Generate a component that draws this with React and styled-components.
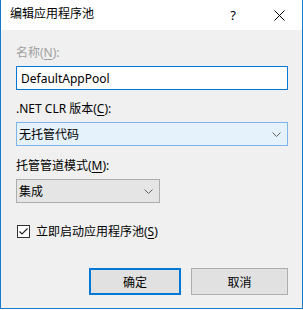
import React from "react";
import styled, { createGlobalStyle } from "styled-components";

const Global = createGlobalStyle`
  html, body { margin: 0; padding: 0; background: #ffffff; }
  body { font-family: "Noto Sans", "Noto Sans CJK SC", sans-serif; font-size: 12px; color: #000; }
`;

const Window = styled.div`
  width: 303px;
  height: 309px;
  box-sizing: border-box;
  border: 1px solid #1979ca;
  border-top: none;
  background: #f0f0f0;
  display: flex;
  flex-direction: column;
`;

const TitleBar = styled.div`
  height: 30px;
  background: #ffffff;
  display: flex;
  align-items: center;
  padding-left: 9px;
  flex-shrink: 0;
`;

const Title = styled.div`
  flex: 1;
  font-size: 12px;
  line-height: 16px;
  margin-top: -2px;
`;

const TitleButton = styled.div`
  width: 46px;
  height: 30px;
  display: flex;
  align-items: center;
  justify-content: center;
  font-size: 13px;
  color: #000;
`;

const Body = styled.div`
  flex: 1;
  padding: 0 14px 0 15px;
  display: flex;
  flex-direction: column;
`;

const Label = styled.div`
  font-size: 12px;
  line-height: 16px;
  height: 16px;
  margin-top: ${(p) => p.$mt}px;
  color: ${(p) => (p.$disabled ? "#a0a0a0" : "#000")};
  white-space: nowrap;
`;

const U = styled.span`
  text-decoration: underline;
  text-underline-offset: 2px;
`;

const TextBox = styled.div`
  margin-top: ${(p) => p.$mt}px;
  height: 24px;
  box-sizing: border-box;
  border: 1px solid #0078d7;
  background: #ffffff;
  display: flex;
  align-items: center;
  padding-left: 4px;
  font-size: 12px;
`;

const Combo = styled.div`
  margin-top: ${(p) => p.$mt}px;
  width: ${(p) => p.$w}px;
  height: 24px;
  box-sizing: border-box;
  border: 1px solid ${(p) => (p.$hover ? "#7eb4ea" : "#adadad")};
  background: ${(p) => (p.$hover ? "#e5f1fb" : "#e5e5e5")};
  display: flex;
  align-items: center;
  padding: 0 6px 0 2px;
  font-size: 12px;
`;

const ComboText = styled.div`
  flex: 1;
`;

const CheckRow = styled.div`
  margin-top: 20px;
  display: flex;
  align-items: center;
  height: 16px;
  padding-left: 1px;
`;

const CheckBox = styled.div`
  width: 13px;
  height: 13px;
  box-sizing: border-box;
  border: 1px solid #333333;
  background: #ffffff;
  display: flex;
  align-items: center;
  justify-content: center;
  margin-right: 6px;
`;

const ButtonRow = styled.div`
  margin-top: 29px;
  display: flex;
  justify-content: flex-end;
  gap: 10px;
`;

const Button = styled.div`
  width: ${(p) => p.$w}px;
  height: 27px;
  box-sizing: border-box;
  border: ${(p) => (p.$default ? "2px solid #0078d7" : "1px solid #adadad")};
  background: #e1e1e1;
  display: flex;
  align-items: center;
  justify-content: center;
  font-size: 12px;
`;

const Chevron = () => (
  <svg width="9" height="5" viewBox="0 0 9 5">
    <path d="M0.5 0.5 L4.5 4.5 L8.5 0.5" fill="none" stroke="#606060" strokeWidth="1" />
  </svg>
);

export default function App() {
  return (
    <>
      <Global />
      <Window>
        <TitleBar>
          <Title>编辑应用程序池</Title>
          <TitleButton>?</TitleButton>
          <TitleButton>
            <svg width="11" height="11" viewBox="0 0 11 11">
              <path d="M0.5 0.5 L10.5 10.5 M10.5 0.5 L0.5 10.5" stroke="#000" strokeWidth="1" />
            </svg>
          </TitleButton>
        </TitleBar>
        <Body>
          <Label $mt={15} $disabled>
            名称(<U>N</U>):
          </Label>
          <TextBox $mt={5}>DefaultAppPool</TextBox>
          <Label $mt={11}>
            .NET CLR 版本(<U>C</U>):
          </Label>
          <Combo $mt={5} $w={272} $hover>
            <ComboText>无托管代码</ComboText>
            <Chevron />
          </Combo>
          <Label $mt={12}>
            托管管道模式(<U>M</U>):
          </Label>
          <Combo $mt={5} $w={144}>
            <ComboText>集成</ComboText>
            <Chevron />
          </Combo>
          <CheckRow>
            <CheckBox>
              <svg width="11" height="11" viewBox="0 0 11 11">
                <path d="M1.5 5.5 L4 8 L9.5 2.5" fill="none" stroke="#222" strokeWidth="1.1" />
              </svg>
            </CheckBox>
            <span>
              立即启动应用程序池(<U>S</U>)
            </span>
          </CheckRow>
          <ButtonRow>
            <Button $w={92} $default>确定</Button>
            <Button $w={97}>取消</Button>
          </ButtonRow>
        </Body>
      </Window>
    </>
  );
}
